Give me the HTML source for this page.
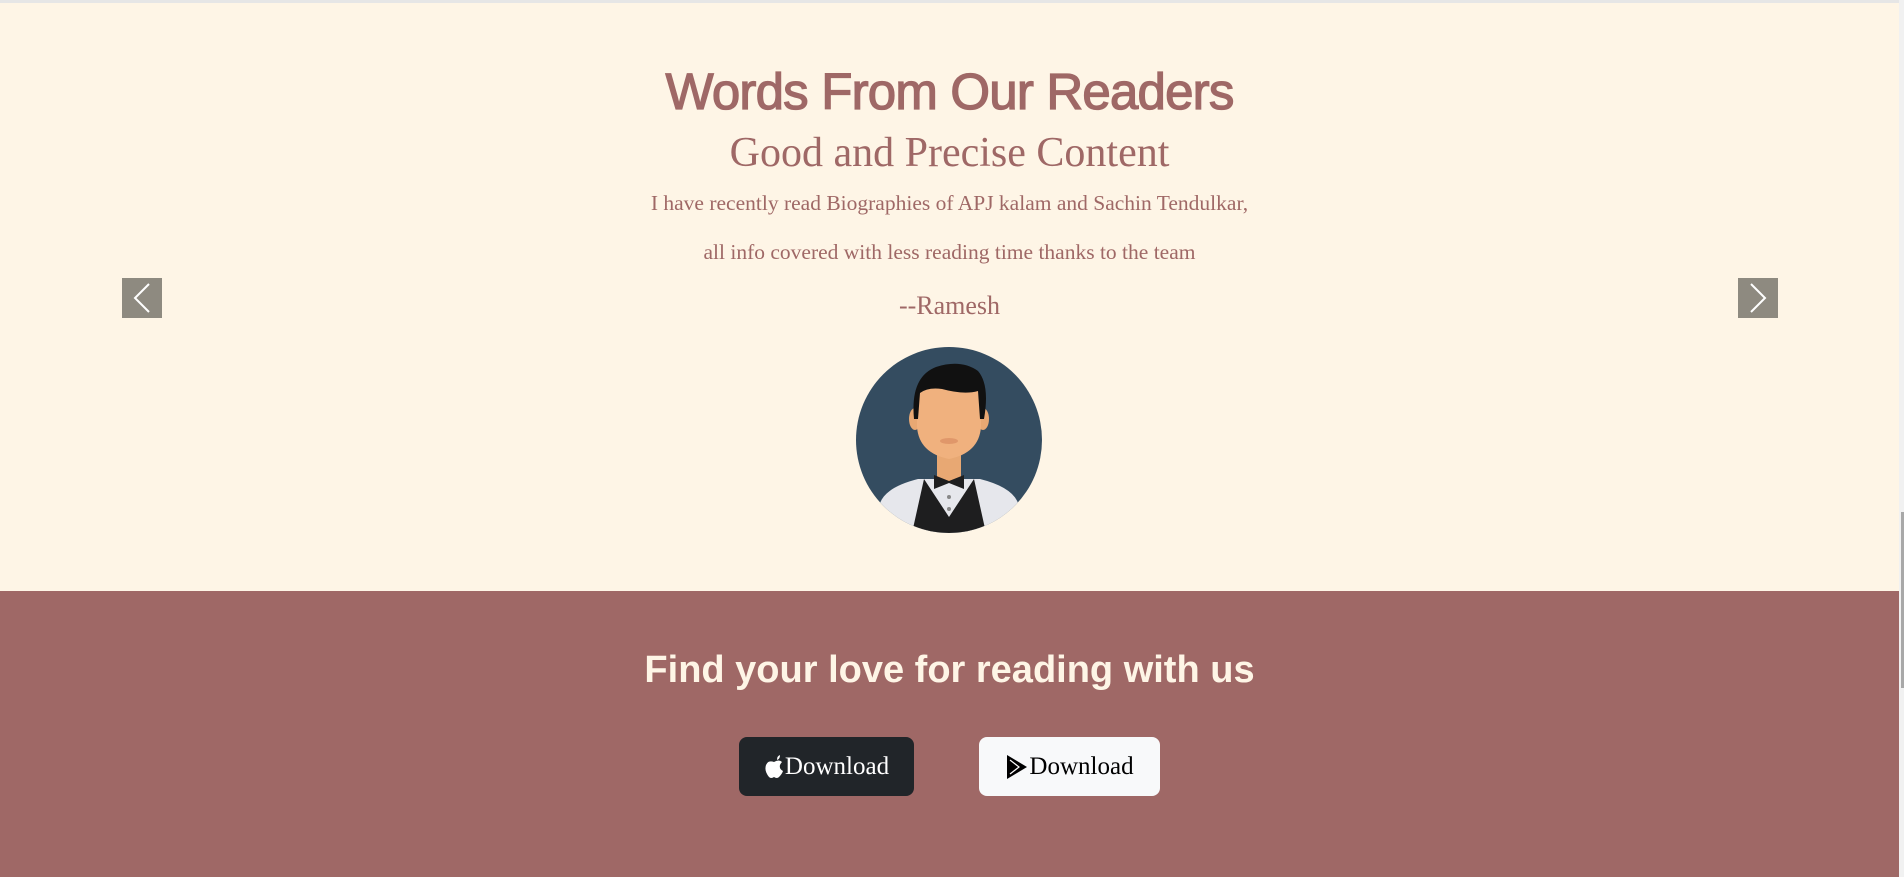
<!DOCTYPE html>
<html><head><meta charset="utf-8"><style>
*{margin:0;padding:0;box-sizing:border-box}
body{width:1904px;height:877px;overflow:hidden;background:#fef5e6;position:relative;font-family:"Liberation Serif",serif}
.top{position:absolute;left:0;top:0;width:1899px;height:3px;background:#e6e6e6}
.c{position:absolute;left:0;width:1899px;text-align:center;white-space:nowrap}
.h1{top:60px;font-family:"Liberation Sans",sans-serif;font-size:51px;color:#9f6866;letter-spacing:-0.8px;line-height:64px;-webkit-text-stroke:1.3px #9f6866}
.h2{top:130px;font-size:42px;color:#9f6866;line-height:46px}
.p{font-size:21.5px;color:#9f6866;line-height:24px}
.arrow{position:absolute;top:278px;width:40px;height:40px;background:#8e8a80}
.brown{position:absolute;left:0;top:591px;width:1899px;height:286px;background:#9f6866}
.find{top:645px;font-family:"Liberation Sans",sans-serif;font-weight:bold;font-size:38px;color:#fef5e6;letter-spacing:0px;line-height:50px}
.btn{position:absolute;top:737px;height:59px;border-radius:8px;font-size:25px;display:flex;align-items:center;justify-content:center}
.sb{position:absolute;left:1899px;top:0;width:5px;height:877px;background:#f1f1f1}
.th{position:absolute;left:1901px;top:512px;width:3px;height:176px;background:#a8a8a8}
</style></head><body>
<div class="top"></div>
<div class="c h1">Words From Our Readers</div>
<div class="c h2">Good and Precise Content</div>
<div class="c p" style="top:191px">I have recently read Biographies of APJ kalam and Sachin Tendulkar,</div>
<div class="c p" style="top:240px">all info covered with less reading time thanks to the team</div>
<div class="c" style="top:291px;font-size:26px;color:#9f6866;line-height:30px">--Ramesh</div>
<div class="arrow" style="left:122px"><svg width="40" height="40"><path d="M27 6 L13 20 L27 34" fill="none" stroke="#fff" stroke-width="2"/></svg></div>
<div class="arrow" style="left:1738px"><svg width="40" height="40"><path d="M13 6 L27 20 L13 34" fill="none" stroke="#fff" stroke-width="2"/></svg></div>
<svg style="position:absolute;left:856px;top:347px" width="186" height="186" viewBox="0 0 186 186">
<defs><clipPath id="cc"><circle cx="93" cy="93" r="93"/></clipPath></defs>
<circle cx="93" cy="93" r="93" fill="#344c60"/>
<g clip-path="url(#cc)">
<path d="M20 186 L24 156 Q30 140 62 132 L124 132 Q156 140 162 156 L166 186Z" fill="#e6e7ec"/>
<path d="M68 132 L93 170 L118 132 L130 186 L56 186Z" fill="#1e1e1f"/>
<rect x="81" y="100" width="24" height="34" fill="#e8a873"/>
<ellipse cx="59" cy="72" rx="6" ry="11" fill="#e8a873"/>
<ellipse cx="127" cy="72" rx="6" ry="11" fill="#e8a873"/>
<path d="M61 50 Q61 32 93 32 Q125 32 125 50 L125 80 Q123 106 93 112 Q63 106 61 80Z" fill="#f0b17e"/>
<path d="M58 72 Q54 30 80 20 Q105 12 122 24 Q134 38 128 72 L124 72 L122 44 Q108 48 86 42 Q72 40 64 46 L62 72Z" fill="#111"/>
<ellipse cx="93" cy="94" rx="9" ry="3" fill="#e0976a"/>
<path d="M78 128 L93 134 L108 128 L108 142 L93 136 L78 142Z" fill="#1e1e1f"/>
<circle cx="93" cy="150" r="2" fill="#888"/><circle cx="93" cy="162" r="2" fill="#888"/>
</g></svg>
<div class="brown"></div>
<div class="c find">Find your love for reading with us</div>
<div class="btn" style="left:739px;width:175px;background:#212529;color:#fff"><svg width="20" height="24" viewBox="0 0 20 24" style="margin-right:1px"><path d="M13 5 Q13 1 16 0 Q16 4 13 5Z M10 7 Q4 5 2 10 Q0 16 5 22 Q7 24 10 22 Q13 24 15 22 Q18 19 19 16 Q15 14 16 10 Q17 8 18 7 Q15 4 10 7Z" fill="#fff"/></svg>Download</div>
<div class="btn" style="left:979px;width:181px;background:#f8f9fa;color:#000"><svg width="24" height="26" viewBox="0 0 24 26"><path d="M2 1 L22 13 L2 25Z" fill="#000"/><path d="M5 6 L14 13 L5 20" fill="none" stroke="#fff" stroke-width="1.2"/></svg>Download</div>
<div class="sb"></div><div class="th"></div>
</body></html>
